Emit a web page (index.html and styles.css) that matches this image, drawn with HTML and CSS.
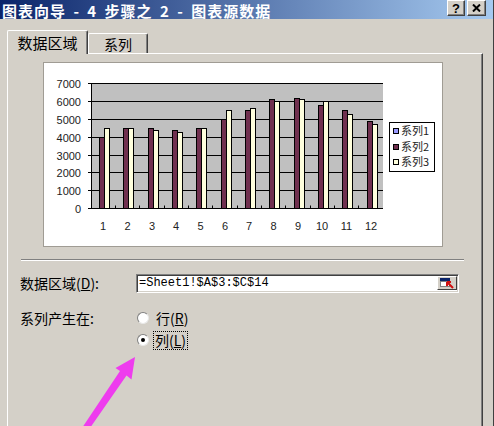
FILE: index.html
```html
<!DOCTYPE html>
<html lang="zh">
<head>
<meta charset="utf-8">
<title>图表向导</title>
<link rel="stylesheet" href="styles.css">
</head>
<body>
<div class="window">
  <div class="titlebar">
    <span class="title">图表向导 - 4 步骤之 2 - 图表源数据</span>
    <div class="tbtns">
      <span class="tbtn">?</span>
      <span class="tbtn tclose"><svg width="9" height="8" viewBox="0 0 9 8"><path d="M1 0.5 L8 7.5 M8 0.5 L1 7.5" stroke="#000" stroke-width="2"/></svg></span>
    </div>
  </div>
  <div class="dlg">
    <div class="tabs">
      <div class="tab active">数据区域</div>
      <div class="tab">系列</div>
    </div>
    <div class="panel">
      <div class="chart">
        <svg class="chart-svg" width="398" height="183" viewBox="0 0 398 183">
          <rect x="47" y="20" width="292" height="125.5" fill="#c0c0c0"/>
          <g stroke="#000" stroke-width="1">
            <line x1="44" y1="20.5" x2="339" y2="20.5"/>
            <line x1="44" y1="38.5" x2="339" y2="38.5"/>
            <line x1="44" y1="56.5" x2="339" y2="56.5"/>
            <line x1="44" y1="74.5" x2="339" y2="74.5"/>
            <line x1="44" y1="92.5" x2="339" y2="92.5"/>
            <line x1="44" y1="109.5" x2="339" y2="109.5"/>
            <line x1="44" y1="127.5" x2="339" y2="127.5"/>
            <line x1="44" y1="145.5" x2="339" y2="145.5"/>
            <line x1="47.5" y1="20" x2="47.5" y2="146"/>
            <line x1="71.5" y1="142.5" x2="71.5" y2="146"/>
            <line x1="95.5" y1="142.5" x2="95.5" y2="146"/>
            <line x1="120.5" y1="142.5" x2="120.5" y2="146"/>
            <line x1="144.5" y1="142.5" x2="144.5" y2="146"/>
            <line x1="168.5" y1="142.5" x2="168.5" y2="146"/>
            <line x1="193.5" y1="142.5" x2="193.5" y2="146"/>
            <line x1="217.5" y1="142.5" x2="217.5" y2="146"/>
            <line x1="241.5" y1="142.5" x2="241.5" y2="146"/>
            <line x1="266.5" y1="142.5" x2="266.5" y2="146"/>
            <line x1="290.5" y1="142.5" x2="290.5" y2="146"/>
            <line x1="314.5" y1="142.5" x2="314.5" y2="146"/>
          </g>
          <g class="s2">
            <rect x="55.5" y="74.5" width="5" height="71"/>
            <rect x="79.5" y="65.5" width="5" height="80"/>
            <rect x="104.5" y="65.5" width="5" height="80"/>
            <rect x="128.5" y="67.5" width="5" height="78"/>
            <rect x="152.5" y="65.5" width="5" height="80"/>
            <rect x="177.5" y="56.5" width="5" height="89"/>
            <rect x="201.5" y="47.5" width="5" height="98"/>
            <rect x="225.5" y="36.5" width="5" height="109"/>
            <rect x="250.5" y="35.5" width="5" height="110"/>
            <rect x="274.5" y="42.5" width="5" height="103"/>
            <rect x="298.5" y="47.5" width="5" height="98"/>
            <rect x="323.5" y="58.5" width="5" height="87"/>
          </g>
          <g class="s3">
            <rect x="60.5" y="65.5" width="5" height="80"/>
            <rect x="84.5" y="65.5" width="5" height="80"/>
            <rect x="109.5" y="67.5" width="5" height="78"/>
            <rect x="133.5" y="69.5" width="5" height="76"/>
            <rect x="157.5" y="65.5" width="5" height="80"/>
            <rect x="182.5" y="47.5" width="5" height="98"/>
            <rect x="206.5" y="45.5" width="5" height="100"/>
            <rect x="230.5" y="38.5" width="5" height="107"/>
            <rect x="255.5" y="36.5" width="5" height="109"/>
            <rect x="279.5" y="38.5" width="5" height="107"/>
            <rect x="303.5" y="51.5" width="5" height="94"/>
            <rect x="328.5" y="61.5" width="5" height="84"/>
          </g>
          <g class="ylab">
            <text x="37" y="24.5">7000</text>
            <text x="37" y="42.5">6000</text>
            <text x="37" y="60.5">5000</text>
            <text x="37" y="78.5">4000</text>
            <text x="37" y="96.5">3000</text>
            <text x="37" y="113.5">2000</text>
            <text x="37" y="131.5">1000</text>
            <text x="37" y="149.5">0</text>
          </g>
          <g class="xlab">
            <text x="59" y="167">1</text>
            <text x="83.5" y="167">2</text>
            <text x="108" y="167">3</text>
            <text x="132" y="167">4</text>
            <text x="156.5" y="167">5</text>
            <text x="181" y="167">6</text>
            <text x="205" y="167">7</text>
            <text x="229.5" y="167">8</text>
            <text x="254" y="167">9</text>
            <text x="278" y="167">10</text>
            <text x="302.5" y="167">11</text>
            <text x="327" y="167">12</text>
          </g>
          <rect x="345.5" y="59.5" width="45" height="49" fill="#fff" stroke="#000"/>
          <rect x="349.5" y="65.5" width="5" height="5" fill="#9999ff" stroke="#000"/>
          <rect x="349.5" y="81.5" width="5" height="5" fill="#70304f" stroke="#000"/>
          <rect x="349.5" y="96.5" width="5" height="5" fill="#ffffdd" stroke="#000"/>
          <g class="leg">
            <text x="357" y="72">系列1</text>
            <text x="357" y="88">系列2</text>
            <text x="357" y="103">系列3</text>
          </g>
        </svg>
      </div>
      <div class="sep"></div>
      <div class="row">
        <span class="lbl">数据区域(<u>D</u>):</span>
        <div class="input">
          <span class="itext">=Sheet1!$A$3:$C$14</span>
          <span class="pick"><svg width="18" height="12" viewBox="0 0 18 12"><rect x="2" y="1" width="10" height="3" fill="#0a246a"/><rect x="2.5" y="4.5" width="9" height="5" fill="#fff" stroke="#808080"/><path d="M9 5 L15 11 M9 5 L9 9 M9 5 L13 5" stroke="#d01010" stroke-width="2" fill="none"/></svg></span>
        </div>
      </div>
      <div class="row row2">
        <span class="lbl">系列产生在:</span>
        <div class="radios">
          <div class="radio"><span class="dot"></span><span class="rtext">行(<u>R</u>)</span></div>
          <div class="radio"><span class="dot on"></span><span class="rtext focus">列(<u>L</u>)</span></div>
        </div>
      </div>
    </div>
  </div>
</div>
<svg class="arrow" width="494" height="426" viewBox="0 0 494 426">
  <polygon points="135,357 131.5,379.5 126.5,375.5 90,428 82,428 120,371 115.5,368" fill="#ee3cee"/>
</svg>
</body>
</html>
```

FILE: styles.css
```css
* { box-sizing: border-box; }
html, body { margin: 0; padding: 0; }
body {
  width: 494px;
  height: 426px;
  overflow: hidden;
  background: #d4d0c8;
  font-family: "Noto Sans CJK SC", "Liberation Sans", sans-serif;
  color: #000;
  position: relative;
}
.window {
  width: 494px;
  height: 426px;
  overflow: hidden;
  border-right: 1px solid #404040;
}
.titlebar {
  height: 19px;
  display: flex;
  align-items: flex-start;
  justify-content: space-between;
  background: linear-gradient(90deg, #0a246a 0%, #a6caf0 100%);
}
.title {
  color: #fff;
  font-weight: bold;
  font-size: 15px;
  line-height: 22px;
  height: 19px;
  padding-left: 2px;
  letter-spacing: 1px;
  word-spacing: 3px;
  white-space: nowrap;
}
.tbtns {
  display: flex;
  gap: 2px;
  margin-right: 7px;
}
.tbtn {
  width: 18px;
  height: 16px;
  background: #d4d0c8;
  border: 1px solid;
  border-color: #fff #404040 #404040 #fff;
  box-shadow: inset -1px -1px #808080;
  display: flex;
  align-items: center;
  justify-content: center;
  font-family: "Liberation Sans", sans-serif;
  font-weight: bold;
  font-size: 13px;
  line-height: 1;
}
.tclose { width: 19px; }
.dlg { padding-top: 11px; }
.tabs {
  display: flex;
  align-items: flex-end;
  height: 24px;
  margin-left: 7px;
  margin-bottom: -1px;
  position: relative;
  z-index: 1;
}
.tab {
  width: 60px;
  height: 20px;
  margin-bottom: 1px;
  background: #d4d0c8;
  border-top: 1px solid #fff;
  border-left: 1px solid #fff;
  border-right: 1px solid #404040;
  border-radius: 2px 2px 0 0;
  box-shadow: inset -1px 0 #808080;
  font-size: 14px;
  display: flex;
  align-items: center;
  justify-content: center;
}
.tab.active {
  width: 81px;
  height: 24px;
  margin-bottom: 0;
  padding-bottom: 1px;
  font-size: 15px;
}
.panel {
  margin-left: 7px;
  width: 476px;
  height: 373px;
  border-top: 1px solid #fff;
  border-left: 1px solid #fff;
  border-right: 1px solid #404040;
  box-shadow: inset -1px 0 #808080;
  padding-top: 8px;
}
.chart {
  margin-left: 35px;
  width: 400px;
  height: 185px;
  background: #fff;
  border: 1px solid #a09c94;
}
.chart-svg { display: block; }
.s2 rect { fill: #70304f; stroke: #000; }
.s3 rect { fill: #ffffdd; stroke: #000; }
.ylab text {
  font-family: "Liberation Sans", sans-serif;
  font-size: 11px;
  text-anchor: end;
  fill: #222;
}
.xlab text {
  font-family: "Liberation Sans", sans-serif;
  font-size: 11px;
  text-anchor: middle;
  fill: #222;
}
.leg text {
  font-family: "Noto Sans CJK SC", sans-serif;
  font-size: 11px;
  fill: #222;
}
.sep {
  margin: 12px 0 0 13px;
  width: 443px;
  height: 2px;
  border-top: 1px solid #808080;
  border-bottom: 1px solid #fff;
}
.row {
  display: flex;
  align-items: center;
  padding-left: 12px;
  margin-top: 11px;
}
.row2 {
  align-items: flex-start;
  margin-top: 13px;
}
.lbl {
  width: 116px;
  font-size: 14px;
  line-height: 22px;
  white-space: nowrap;
}
.input {
  width: 323px;
  height: 19px;
  background: #fff;
  border: 1px solid;
  border-color: #808080 #fff #fff #808080;
  box-shadow: inset 1px 1px #404040, inset -1px -1px #d4d0c8;
  display: flex;
  align-items: center;
  justify-content: space-between;
  padding: 1px 1px 1px 2px;
}
.itext {
  font-family: "Liberation Mono", monospace;
  font-size: 12px;
  line-height: 15px;
}
.pick {
  width: 20px;
  height: 14px;
  background: #d4d0c8;
  border: 1px solid;
  border-color: #fff #404040 #404040 #fff;
  display: flex;
  align-items: center;
  justify-content: center;
}
.pick svg { display: block; }
.radios { display: flex; flex-direction: column; }
.radio {
  height: 22px;
  display: flex;
  align-items: center;
  padding-left: 1px;
}
.dot {
  width: 12px;
  height: 12px;
  border-radius: 50%;
  background: #fff;
  border: 1px solid;
  border-color: #808080 #e8e8e8 #e8e8e8 #808080;
  display: flex;
  align-items: center;
  justify-content: center;
}
.dot.on::after {
  content: "";
  width: 4px;
  height: 4px;
  border-radius: 50%;
  background: #000;
}
.rtext {
  margin-left: 5px;
  font-size: 14px;
  line-height: 17px;
  border: 1px solid transparent;
  padding: 0 1px;
}
.rtext.focus {
  margin-left: 4px;
  border: 1px dotted #000;
}
.arrow {
  position: absolute;
  left: 0;
  top: 0;
  pointer-events: none;
}
```
